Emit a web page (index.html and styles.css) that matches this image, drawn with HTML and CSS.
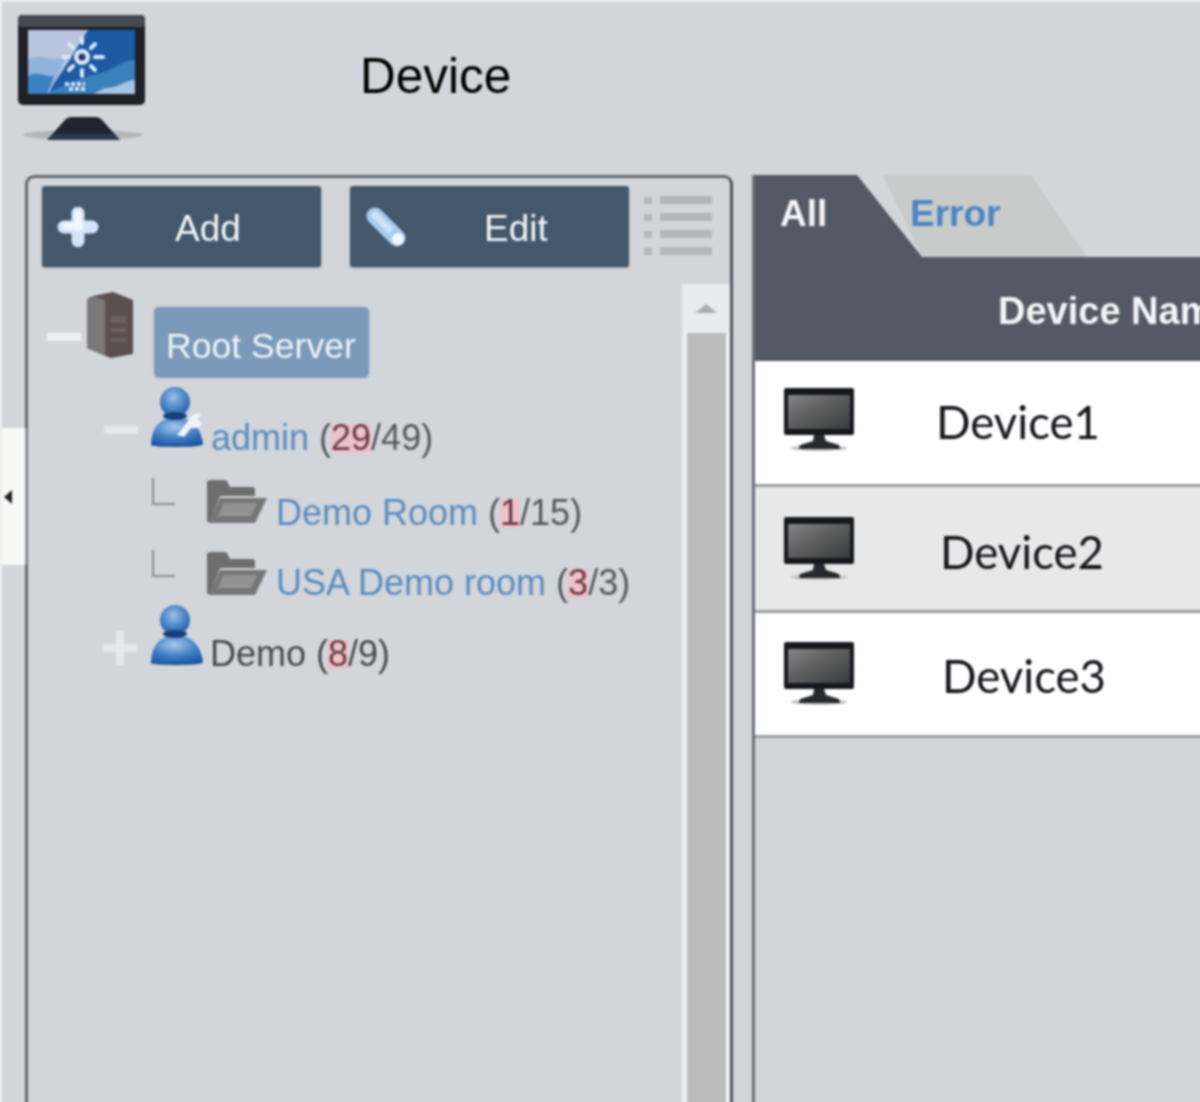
FILE: index.html
```html
<!DOCTYPE html>
<html lang="en">
<head>
<meta charset="utf-8">
<title>Device</title>
<link rel="stylesheet" href="styles.css">
</head>
<body>
<svg class="defs" width="0" height="0" aria-hidden="true">
  <defs>
    <linearGradient id="scr" x1="0" y1="0" x2="1" y2="1">
      <stop offset="0" stop-color="#858585"/><stop offset="0.45" stop-color="#5f5f5f"/><stop offset="1" stop-color="#373b3c"/>
    </linearGradient>
    <radialGradient id="head" cx="0.45" cy="0.35" r="0.7">
      <stop offset="0" stop-color="#9cc0e6"/><stop offset="0.55" stop-color="#4a84c4"/><stop offset="1" stop-color="#1d5aa6"/>
    </radialGradient>
    <radialGradient id="torso" cx="0.45" cy="0.3" r="0.8">
      <stop offset="0" stop-color="#a8c8ea"/><stop offset="0.55" stop-color="#3f7dc4"/><stop offset="1" stop-color="#1a55a0"/>
    </radialGradient>
    <symbol id="mini-monitor" viewBox="0 0 70 64">
      <ellipse cx="35" cy="60" rx="28" ry="3" fill="#c0c0c0"/>
      <rect x="0" y="0" width="70" height="47" rx="2" fill="#16181d"/>
      <rect x="4" y="7" width="62" height="34" fill="url(#scr)"/>
      <path d="M30 47h10l2 6 13 4 1 4H15l1-4 13-4z" fill="#26292d"/>
    </symbol>
    <symbol id="user" viewBox="0 0 54 62">
      <ellipse cx="26" cy="60" rx="25" ry="2" fill="#1b4f95"/>
      <path d="M1 60c0-13 6-23 15-26h20c9 3 16 13 17 26z" fill="url(#torso)"/>
      <circle cx="25" cy="17" r="15" fill="url(#head)"/>
      <ellipse cx="25" cy="31" rx="12" ry="4" fill="#173f7d"/>
    </symbol>
    <symbol id="folder" viewBox="0 0 62 46">
      <path d="M1 5q0-3 3-3h14q3 0 4 3l2 4h22q3 0 3 3v6H14L4 44H1z" fill="#6e6e6e"/>
      <path d="M14 20h47L49 45H3z" fill="#777"/>
      <path d="M18 25h33l-6 13H12z" fill="#939393"/>
    </symbol>
  </defs>
</svg>
<div class="page">
  <header class="top">
    <svg class="logo" viewBox="0 0 130 128" width="130" height="128" role="img" aria-label="Device">
      <ellipse cx="66" cy="121" rx="60" ry="5" fill="#b3b6bb"/>
      <path d="M30 126l17-19q3-4 8-4h23q5 0 8 4l17 19z" fill="#1f2530"/>
      <path d="M36 120h61l6 6H30z" fill="#2c3a4e"/>
      <rect x="1" y="1" width="127" height="90" rx="5" fill="#1f2127"/>
      <rect x="1" y="1" width="127" height="12" rx="4" fill="#454a52"/>
      <rect x="11" y="16" width="107" height="64" fill="#1d5aa4"/>
      <path d="M11 16h60L50 50 30 80H11z" fill="#b9c5dc"/>
      <path d="M11 46c12-8 22 4 38-4L32 80H11z" fill="#8fb3dc"/>
      <path d="M11 62c10-6 18 2 26 0l-7 18H11z" fill="#3b80c0"/>
      <path d="M118 46c-14 0-20 10-38 14-14 4-30 8-50 20h88z" fill="#3a80bc"/>
      <path d="M118 66c-10 0-16 8-30 8l-12 6h42z" fill="#a5c4e4"/>
      <g stroke="#dce7f5" stroke-width="4" stroke-linecap="round">
        <path d="M65 24v5M65 56v6M46 43h6M78 43h8M52 30l4 4M78 30l-4 4M52 56l4-4M78 56l-4-4"/>
      </g>
      <circle cx="65" cy="43" r="8" fill="#dce7f5"/>
      <circle cx="65" cy="43" r="3.5" fill="#143a70"/>
      <path d="M48 70h20M52 75h16" stroke="#d3e1f2" stroke-width="4" stroke-dasharray="4 2"/>
    </svg>
    <h1 class="title">Device</h1>
  </header>

  <main class="main">
    <section class="panel">
      <div class="toolbar">
        <button class="btn" type="button">
          <svg class="btn-icon" viewBox="0 0 42 40" width="42" height="40" aria-hidden="true">
            <path d="M21 6v28M7 20h28" stroke="#d3e5f8" stroke-width="13" stroke-linecap="round"/>
            <path d="M21 7v13M9 19h14" stroke="#f2f7fd" stroke-width="7" stroke-linecap="round"/>
          </svg>
          <span class="btn-label btn-label-add">Add</span>
        </button>
        <button class="btn" type="button">
          <svg class="btn-icon" viewBox="0 0 42 40" width="42" height="40" aria-hidden="true">
            <path d="M10 9l22 22" stroke="#a8cbef" stroke-width="17" stroke-linecap="round"/>
            <path d="M10 8l14 14" stroke="#cfe2f6" stroke-width="7" stroke-linecap="round"/>
            <circle cx="33" cy="32" r="6" fill="#f2f7fd"/>
          </svg>
          <span class="btn-label btn-label-edit">Edit</span>
        </button>
        <svg class="list-icon" viewBox="0 0 68 62" width="68" height="62" aria-hidden="true">
          <g fill="#b4b6b9">
            <rect x="0" y="1" width="8" height="7"/><rect x="16" y="0" width="52" height="8"/>
            <rect x="0" y="18" width="8" height="7"/><rect x="16" y="17" width="52" height="8"/>
            <rect x="0" y="35" width="8" height="7"/><rect x="16" y="34" width="52" height="8"/>
            <rect x="0" y="52" width="8" height="7"/><rect x="16" y="51" width="52" height="8"/>
          </g>
        </svg>
      </div>
      <div class="tree-wrap">
        <div class="tree">
          <div class="row row-root">
            <span class="toggle toggle-minus toggle-root"></span>
            <svg class="server" viewBox="0 0 48 66" width="48" height="66" aria-hidden="true">
              <path d="M0 10Q0 6 6 4L26 0l20 8v54l-22 4L0 56z" fill="#59504f"/>
              <path d="M0 10Q0 6 6 4l12 4v56L0 56z" fill="#7c797b"/>
              <path d="M24 24h15v7H24zM24 36h15v4H24zM24 46h15v4H24z" fill="#6f5f62"/>
            </svg>
            <span class="pill">Root Server</span>
          </div>
          <div class="row row-admin">
            <span class="toggle toggle-minus toggle-admin"></span>
            <svg class="user" width="54" height="62" aria-hidden="true"><use href="#user"/>
              <path d="M27 50l11-14c2-6 8-9 14-7l-5 5 5 4c-2 5-7 6-11 5l-7 9z" fill="#eef3f9"/>
            </svg>
            <span class="label label-admin"><span class="blue">admin</span> (<span class="red">29</span>/49)</span>
          </div>
          <div class="row row-room-a">
            <span class="branch"></span>
            <svg class="folder" width="62" height="46" aria-hidden="true"><use href="#folder"/></svg>
            <span class="label label-room"><span class="blue">Demo Room</span> (<span class="red">1</span>/15)</span>
          </div>
          <div class="row row-room-b">
            <span class="branch"></span>
            <svg class="folder" width="62" height="46" aria-hidden="true"><use href="#folder"/></svg>
            <span class="label label-room label-room-b"><span class="blue">USA Demo room</span> (<span class="red">3</span>/3)</span>
          </div>
          <div class="row row-demo">
            <span class="toggle toggle-plus"></span>
            <svg class="user" width="54" height="62" aria-hidden="true"><use href="#user"/></svg>
            <span class="label label-demo">Demo (<span class="red">8</span>/9)</span>
          </div>
        </div>
        <div class="scrollbar">
          <div class="scroll-up"><span class="scroll-arrow"></span></div>
          <div class="scroll-thumb"></div>
        </div>
      </div>
    </section>

    <section class="content">
      <div class="tabs">
        <div class="tab tab-all">All</div>
        <div class="tab tab-error">Error</div>
      </div>
      <div class="thead">Device Name</div>
      <div class="trow">
        <svg class="mini" width="70" height="64" aria-hidden="true"><use href="#mini-monitor"/></svg>
        <span class="cell cell-1">Device1</span>
      </div>
      <div class="trow trow-alt">
        <svg class="mini" width="70" height="64" aria-hidden="true"><use href="#mini-monitor"/></svg>
        <span class="cell cell-2">Device2</span>
      </div>
      <div class="trow trow-last">
        <svg class="mini" width="70" height="64" aria-hidden="true"><use href="#mini-monitor"/></svg>
        <span class="cell cell-3">Device3</span>
      </div>
    </section>
  </main>

  <div class="grip"><span class="grip-arrow"></span></div>
</div>
</body>
</html>
```
FILE: styles.css
```css
* { box-sizing: border-box; }
html, body { margin: 0; padding: 0; height: 100%; overflow: hidden; background: #eceef0; }
.defs { position: absolute; }
.page {
  position: relative;
  width: 1200px;
  height: 1102px;
  margin-left: 2px;
  margin-top: 2px;
  background: #d2d5da;
  overflow: hidden;
  font-family: "Liberation Sans", Arial, sans-serif;
  filter: blur(0.9px);
}
.top {
  display: flex;
  align-items: flex-start;
  height: 173px;
  padding: 12px 0 0 15px;
}
.logo { flex: none; }
.title {
  margin: 26px 0 0 213px;
  font-size: 49.5px;
  line-height: 72px;
  font-weight: 400;
  color: #000;
}
.main { display: flex; align-items: stretch; height: 929px; }
.panel {
  flex: none;
  width: 708px;
  margin-left: 23px;
  border: 3px solid #646a71;
  border-right-color: #50565e;
  border-bottom: 0;
  border-radius: 9px 9px 0 0;
  display: flex;
  flex-direction: column;
}
.toolbar {
  display: flex;
  align-items: flex-start;
  gap: 29px;
  height: 88px;
  padding: 8px 0 0 14px;
}
.btn {
  display: flex;
  align-items: center;
  width: 279px;
  height: 81px;
  padding: 0 0 0 15px;
  border: 0;
  border-radius: 3px;
  background: #44586c;
  box-shadow: 0 1px 2px #8d9399;
  color: #f4f6f8;
  font: 400 37px "Liberation Sans", Arial, sans-serif;
}
.btn-icon { flex: none; }
.btn-label { padding-top: 4px; }
.btn-label-add { margin-left: 76px; }
.btn-label-edit { margin-left: 77px; }
.list-icon { flex: none; margin: 10px 0 0 -14px; }
.tree-wrap { flex: 1; display: flex; min-height: 0; }
.tree { flex: 1; padding-top: 26px; }
.row { display: flex; align-items: flex-start; }
.row-root { height: 93px; padding-left: 19px; }
.row-admin { height: 93px; padding-left: 76px; }
.row-room-a { height: 72px; padding-left: 124px; }
.row-room-b { height: 53px; padding-left: 124px; }
.row-demo { height: 70px; padding-left: 75px; }
.toggle { position: relative; flex: none; width: 34px; height: 8px; background: #eff1f3; }
.toggle-root { margin: 41px 6px 0 0; }
.toggle-admin { margin: 41px 12px 0 0; background: #e6e8ea; }
.toggle-plus { margin: 41px 13px 0 0; background: #e6e8ea; }
.toggle-plus::after {
  content: "";
  position: absolute;
  left: 13px;
  top: -13px;
  width: 8px;
  height: 34px;
  background: #e6e8ea;
}
.server { flex: none; }
.pill {
  flex: none;
  margin: 15px 0 0 19px;
  width: 215px;
  height: 71px;
  padding-left: 12px;
  border-radius: 5px;
  background: #7b9aba;
  box-shadow: 0 0 2px #a3b7cc;
  color: #f0f4f8;
  font-size: 35.6px;
  line-height: 78px;
  white-space: nowrap;
}
.user { flex: none; }
.label {
  flex: none;
  font-size: 36px;
  line-height: 44px;
  color: #55585c;
  white-space: nowrap;
}
.label-admin { margin: 31px 0 0 7px; }
.label-room { margin: 13px 0 0 8px; }
.label-room-b { margin-top: 11px; }
.label-demo { margin: 29px 0 0 6px; color: #4a4a4e; }
.blue { color: #5a8dbf; }
.red { color: #6e3a44; background: linear-gradient(transparent 18%, #ecc2cb 18%, #ecc2cb 88%, transparent 88%); }
.branch {
  flex: none;
  width: 23px;
  height: 27px;
  border-left: 2px solid #8b8d91;
  border-bottom: 2px solid #8b8d91;
}
.folder { flex: none; margin-left: 31px; }
.scrollbar {
  flex: none;
  width: 48px;
  margin-top: 18px;
  display: flex;
  flex-direction: column;
}
.scroll-up {
  height: 49px;
  background: #e9ebed;
  display: flex;
  justify-content: center;
  padding-top: 20px;
}
.scroll-arrow {
  width: 0;
  height: 0;
  border-left: 11px solid transparent;
  border-right: 11px solid transparent;
  border-bottom: 9px solid #a9abae;
}
.scroll-thumb {
  flex: 1;
  margin-left: 5px;
  background: #bcbcbc;
  border-right: 4px solid #f0f2f4;
  box-shadow: -5px 0 0 #eceef0;
}
.content {
  flex: 1;
  margin-left: 19px;
  border-left: 3px solid #6b7078;
  min-width: 0;
}
.tabs { display: flex; height: 82px; }
.tab { flex: none; font-size: 37px; font-weight: 700; line-height: 78px; }
.tab-all {
  width: 167px;
  padding-left: 25px;
  background: #535a66;
  color: #f4f5f7;
  clip-path: polygon(0 0, 102px 0, 167px 100%, 0 100%);
}
.tab-error {
  width: 207px;
  margin-left: -39px;
  padding-left: 27px;
  background: #c9cbca;
  color: #4b86c2;
  clip-path: polygon(0 0, 148px 0, 204px 100%, 39px 100%);
}
.thead {
  height: 104px;
  padding-left: 243px;
  background: #535a66;
  color: #f4f5f7;
  font-size: 38px;
  font-weight: 700;
  line-height: 108px;
  white-space: nowrap;
}
.trow {
  display: flex;
  align-items: flex-start;
  height: 126px;
  padding-left: 29px;
  background: #fff;
  border-bottom: 3px solid #9c9d9f;
}
.trow-alt { background: #e8e8e8; }
.trow-last { height: 125px; }
.mini { flex: none; margin-top: 27px; }
.trow-alt .mini { margin-top: 30px; }
.trow-last .mini { margin-top: 29px; }
.cell {
  font-family: Lato, "Open Sans", sans-serif;
  font-size: 45.5px;
  line-height: 60px;
  color: #14141a;
  white-space: nowrap;
}
.cell-1 { margin: 31px 0 0 82px; }
.cell-2 { margin: 35px 0 0 86px; }
.cell-3 { margin: 33px 0 0 88px; }
.grip {
  position: absolute;
  left: -2px;
  top: 426px;
  width: 27px;
  height: 137px;
  background: #f8f8f6;
  display: flex;
  align-items: center;
  padding-left: 4px;
  border-right: 2px solid #9a9da1;
}
.grip-arrow {
  width: 0;
  height: 0;
  border-top: 7px solid transparent;
  border-bottom: 7px solid transparent;
  border-right: 8px solid #222;
}
```
